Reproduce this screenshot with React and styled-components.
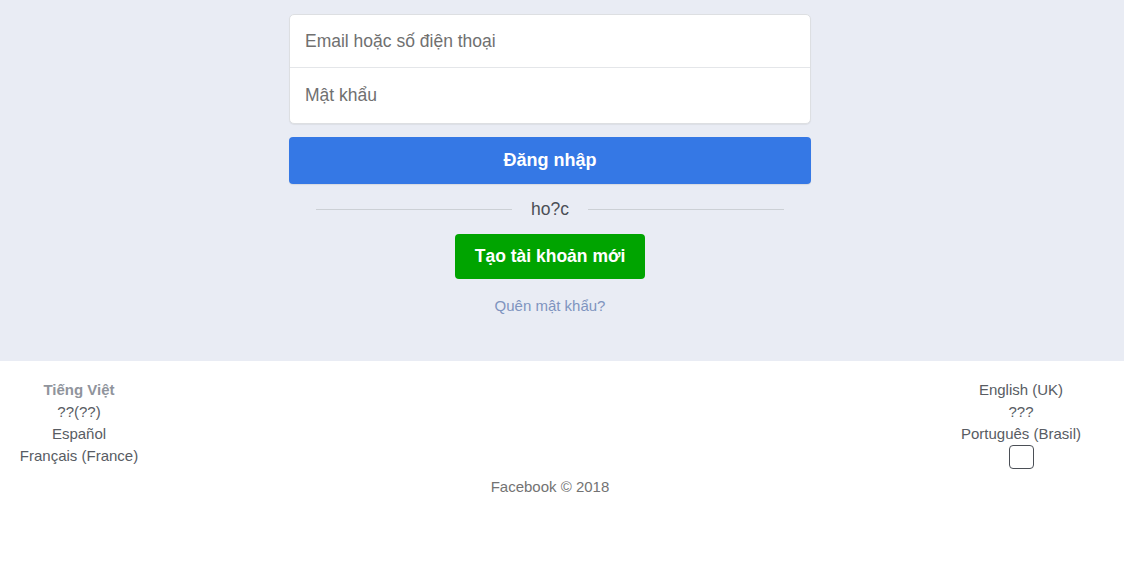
import styled, { createGlobalStyle } from 'styled-components'

const GlobalStyle = createGlobalStyle`
  html, body {
    margin: 0;
    padding: 0;
    background: #fff;
    font-family: "Liberation Sans", Arial, Helvetica, sans-serif;
  }
`

const TopSection = styled.div`
  background-color: #e9ecf4;
  height: 361px;
  box-sizing: border-box;
  padding-top: 14px;
`

const Inner = styled.div`
  width: 1100px;
`

const Form = styled.div`
  width: 522px;
  margin: 0 auto;
`

const FieldBox = styled.div`
  background: #fff;
  border: 1px solid #dddfe2;
  border-radius: 5px;
  overflow: hidden;
  box-shadow: 0 1px 1px rgba(0, 0, 0, 0.06);
`

const Field = styled.input`
  display: block;
  width: 100%;
  box-sizing: border-box;
  height: ${({ $h }) => $h}px;
  border: none;
  border-top: ${({ $first }) => ($first ? 'none' : '1px solid #e4e6e9')};
  padding: 0 15px;
  font-family: inherit;
  font-size: 17.5px;
  color: #1d2129;
  outline: none;
  background: transparent;

  &::placeholder {
    color: #707070;
  }
`

const LoginButton = styled.button`
  display: block;
  width: 100%;
  height: 47px;
  margin-top: 13px;
  border: none;
  border-radius: 4px;
  background-color: #3578e5;
  color: #fff;
  font-family: inherit;
  font-size: 18px;
  font-weight: bold;
  cursor: pointer;
  box-shadow: 0 1px 1px rgba(0, 0, 0, 0.08);
`

const OrRow = styled.div`
  display: flex;
  align-items: center;
  padding: 0 27px;
  margin-top: 13px;
  height: 24px;
`

const OrLine = styled.div`
  flex: 1;
  height: 1px;
  background-color: #ccd0d5;
`

const OrText = styled.span`
  margin: 0 19px;
  font-size: 17.5px;
  color: #4b4f56;
`

const CreateRow = styled.div`
  display: flex;
  justify-content: center;
  margin-top: 13px;
`

const CreateButton = styled.button`
  height: 45px;
  width: 190px;
  border: none;
  border-radius: 4px;
  background-color: #00a400;
  color: #fff;
  font-family: inherit;
  font-size: 17.5px;
  font-weight: bold;
  cursor: pointer;
`

const Forgot = styled.a`
  display: block;
  text-align: center;
  margin-top: 18px;
  font-size: 15px;
  color: #7f94bf;
  text-decoration: none;
`

const Footer = styled.div`
  width: 1100px;
  padding-top: 18px;
`

const LangRow = styled.div`
  display: flex;
  justify-content: space-between;
`

const LangColumn = styled.ul`
  list-style: none;
  margin: 0;
  padding: 0;
  width: 158px;
  display: flex;
  flex-direction: column;
  align-items: center;
`

const LangItem = styled.li`
  font-size: 15px;
  line-height: 22px;
  color: ${({ $active }) => ($active ? '#90949c' : '#585c63')};
  font-weight: ${({ $active }) => ($active ? 'bold' : 'normal')};
  white-space: nowrap;
`

const MoreButton = styled.button`
  width: 25px;
  height: 24px;
  border: 1px solid #4b4f56;
  border-radius: 4px;
  background: #fff;
  padding: 0;
`

const Copyright = styled.div`
  text-align: center;
  margin-top: 2px;
  font-size: 15px;
  line-height: 22px;
  color: #737373;
`

export default function App() {
  return (
    <>
      <GlobalStyle />
      <TopSection>
        <Inner>
          <Form>
            <FieldBox>
              <Field $first $h={52} placeholder="Email hoặc số điện thoại" />
              <Field $h={56} type="password" placeholder="Mật khẩu" />
            </FieldBox>
            <LoginButton>Đăng nhập</LoginButton>
            <OrRow>
              <OrLine />
              <OrText>ho?c</OrText>
              <OrLine />
            </OrRow>
            <CreateRow>
              <CreateButton>Tạo tài khoản mới</CreateButton>
            </CreateRow>
            <Forgot href="#">Quên mật khẩu?</Forgot>
          </Form>
        </Inner>
      </TopSection>
      <Footer>
        <LangRow>
          <LangColumn>
            <LangItem $active>Tiếng Việt</LangItem>
            <LangItem>??(??)</LangItem>
            <LangItem>Español</LangItem>
            <LangItem>Français (France)</LangItem>
          </LangColumn>
          <LangColumn>
            <LangItem>English (UK)</LangItem>
            <LangItem>???</LangItem>
            <LangItem>Português (Brasil)</LangItem>
            <LangItem>
              <MoreButton aria-label="more" />
            </LangItem>
          </LangColumn>
        </LangRow>
        <Copyright>Facebook © 2018</Copyright>
      </Footer>
    </>
  )
}
